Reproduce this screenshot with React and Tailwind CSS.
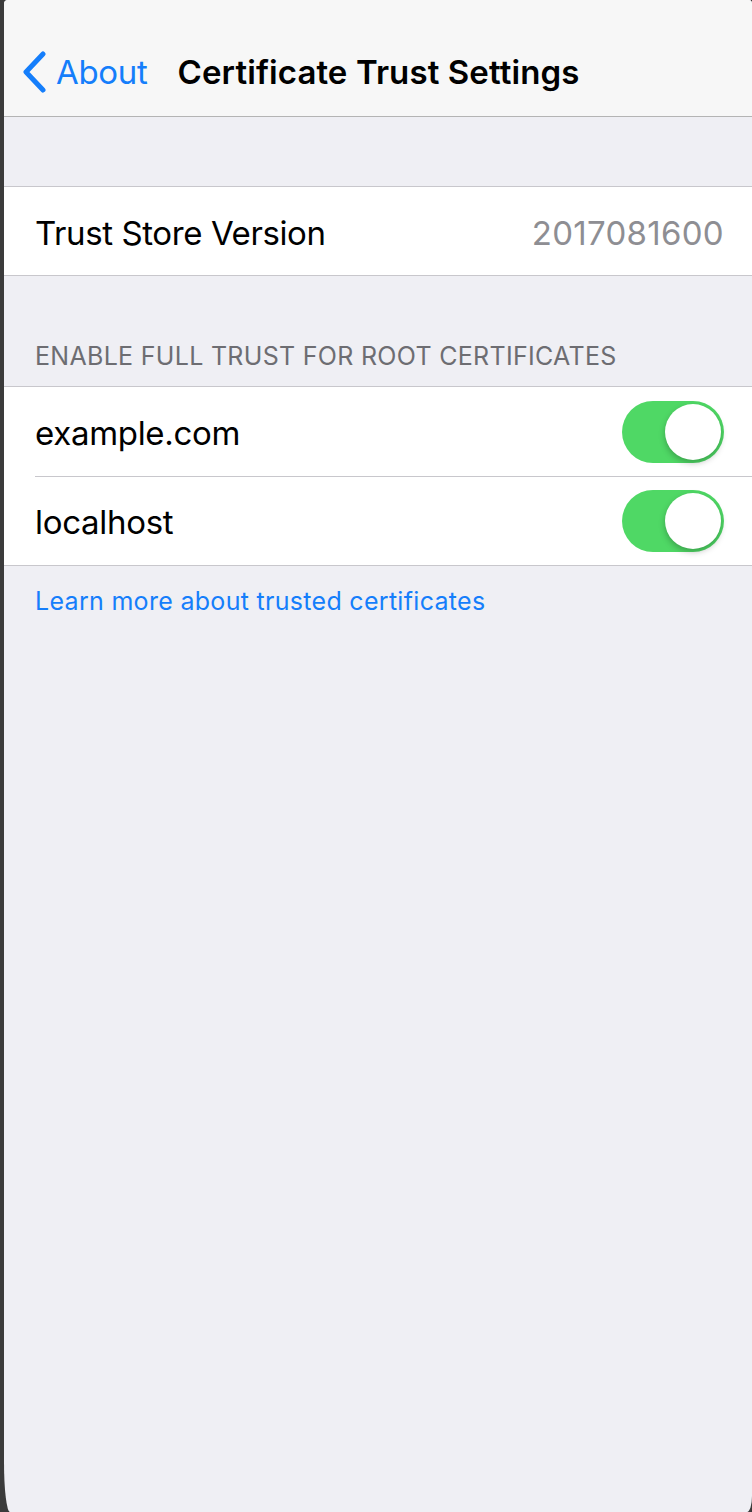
import React, { useState } from 'react';

const FONT = { fontFamily: 'Inter, "Noto Sans", sans-serif' };

const Toggle = ({ on, onChange }) => (
    <button
        onClick={onChange}
        className={`relative w-[102px] h-[62px] rounded-full transition-colors ${on ? 'bg-[#4fd865]' : 'bg-[#e5e5ea]'}`}
    >
        <span
            className={`absolute top-[3px] w-[56px] h-[56px] rounded-full bg-white shadow-[0_3px_6px_rgba(0,0,0,0.25)] ${on ? 'right-[3px]' : 'left-[3px]'}`}
        />
    </button>
);

const App = () => {
    const [hosts, setHosts] = useState({ 'example.com': true, localhost: true });

    return (
        <div className="h-[1512px] bg-[#3b3b3b] overflow-hidden" style={FONT}>
            <div className="ml-[4px] h-full bg-[#efeff4] rounded-tl-[4px] rounded-tr-[3px_4px] rounded-bl-[6px_50px] rounded-br-[5px_16px] overflow-hidden">
                {/* nav bar */}
                <div className="h-[117px] bg-[#f7f7f7] border-b border-[#b4b4b4] flex items-end pb-[19px]">
                    <div className="flex items-center pl-[17px]">
                        <svg width="26" height="42" viewBox="0 0 26 42" className="mr-[9px]">
                            <path d="M22 3 L5 21 L22 39" fill="none" stroke="#157efb" strokeWidth="5" strokeLinecap="round" strokeLinejoin="round" />
                        </svg>
                        <span className="text-[33px] text-[#157efb] tracking-[-0.3px]">About</span>
                    </div>
                    <div className="ml-[30px] text-[33px] font-semibold text-black tracking-[0.1px]">
                        Certificate Trust Settings
                    </div>
                </div>

                {/* trust store */}
                <div className="mt-[69px] bg-white border-y border-[#c8c7cc] h-[90px] pt-[5px] flex items-center justify-between pl-[31px] pr-[28px]">
                    <span className="text-[33px] text-black tracking-[-0.4px]">Trust Store Version</span>
                    <span className="text-[33px] text-[#8e8e93] tracking-[0.3px]">2017081600</span>
                </div>

                {/* section header */}
                <div className="h-[110px] flex items-end pb-[11px] pl-[31px]">
                    <span className="text-[25px] text-[#6d6d72] tracking-[0.3px]">ENABLE FULL TRUST FOR ROOT CERTIFICATES</span>
                </div>

                <div className="bg-white border-y border-[#c8c7cc]">
                    {Object.keys(hosts).map((h, i) => (
                        <div key={h} className="pl-[31px]">
                            <div className={`h-[89px] flex items-center justify-between pr-[28px] ${i > 0 ? 'border-t border-[#c8c7cc]' : ''}`}>
                                <span className="text-[33px] text-black tracking-[-0.3px] pt-[4px]">{h}</span>
                                <Toggle on={hosts[h]} onChange={() => setHosts({ ...hosts, [h]: !hosts[h] })} />
                            </div>
                        </div>
                    ))}
                </div>

                <div className="pl-[31px] pt-[17px]">
                    <a className="text-[25px] text-[#157efb] tracking-[0.3px]">Learn more about trusted certificates</a>
                </div>
            </div>
        </div>
    );
};

export default App;
